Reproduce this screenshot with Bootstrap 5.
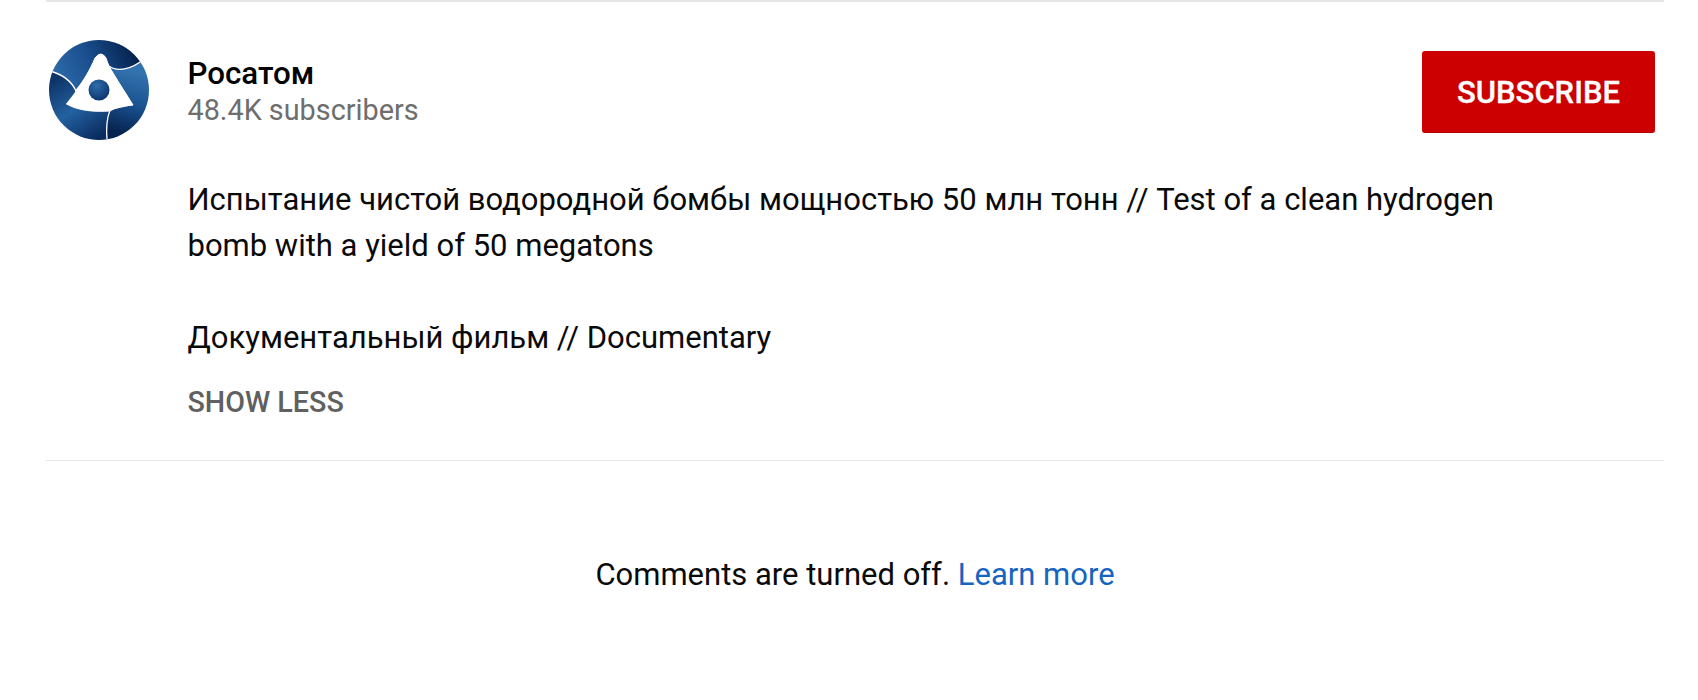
<!DOCTYPE html>
<html lang="en"><head><meta charset="utf-8">
<link href="https://cdn.jsdelivr.net/npm/bootstrap@5.3.0/dist/css/bootstrap.min.css" rel="stylesheet">
<style>
html,body{height:700px;overflow:hidden;background:#fff}
body{font-family:Roboto,"Liberation Sans",sans-serif;color:#0a0a0a}
.page-wrap{margin:0 34px 0 46px}
.owner-block{border-top:2px solid #e6e6e6;border-bottom:1px solid #e6e6e6;height:461px;padding-top:38px}
.avatar-box{width:100px;height:100px;margin:0 38.5px 0 3px;flex:none}
.avatar-box svg{display:block}
.owner-name{font-size:31.3px;font-weight:500;line-height:37px;margin-top:15px;color:#030303}
.sub-count{font-size:28.8px;line-height:37px;color:#6e6e6e}
.sub-btn{width:233px;height:82px;margin:11px 9px 0 0;background:#cc0000;border:0;border-bottom:1px solid #b80000;border-radius:3px;color:#fff;font-size:31px;font-weight:500;padding:4px 0 0;-webkit-text-stroke:.3px #fff}
.desc-block{margin:0 0 0 141.5px;font-size:31px;line-height:45.7px;width:1340px;color:#0a0a0a;padding-top:37px}
.desc-gap{margin-top:47px}
.show-less{font-size:28.7px;font-weight:500;color:#606060;line-height:37px;margin:0 0 0 141.5px;padding-top:23px}
.comments-off{font-size:31px;line-height:45px;margin-top:91px}
.learn-link{color:#1565c0;text-decoration:none}
</style></head><body>
<div class="page-wrap">
  <div class="owner-block">
    <div class="d-flex align-items-start">
      <div class="avatar-box">
        <svg viewBox="0 0 100 100" width="100" height="100" role="img" aria-label="Росатом">
          <defs>
            <clipPath id="disc"><circle cx="50" cy="50" r="50"/></clipPath>
            <linearGradient id="bladeTop" gradientUnits="userSpaceOnUse" x1="12" y1="42" x2="82" y2="8"><stop offset="0" stop-color="#2c68a8"/><stop offset=".45" stop-color="#1a4f8e"/><stop offset="1" stop-color="#06234f"/></linearGradient>
            <linearGradient id="bladeRight" gradientUnits="userSpaceOnUse" x1="85" y1="32" x2="68" y2="92"><stop offset="0" stop-color="#3272ad"/><stop offset=".5" stop-color="#1a5290"/><stop offset="1" stop-color="#06234f"/></linearGradient>
            <linearGradient id="bladeLeft" gradientUnits="userSpaceOnUse" x1="8" y1="38" x2="48" y2="98"><stop offset="0" stop-color="#0e3468"/><stop offset=".5" stop-color="#2361a0"/><stop offset="1" stop-color="#0a2c60"/></linearGradient>
            <radialGradient id="core" cx=".4" cy=".3" r=".8"><stop offset="0" stop-color="#2f6cab"/><stop offset="1" stop-color="#0a2f66"/></radialGradient>
          </defs>
          <g clip-path="url(#disc)">
            <path d="M1 31C12 34 22 40 27 51L51 15L60 26C68 32 82 30 95 19L75 -5H20L-5 25Z" fill="url(#bladeTop)"/>
            <path d="M95 19C82 30 68 32 60 26L84 65L61 70C58 78 57 88 58 99V105H105V19Z" fill="url(#bladeRight)"/>
            <path d="M1 31C12 34 22 40 27 51L17 64L61 70C58 78 57 88 58 99V105H-5V31Z" fill="url(#bladeLeft)"/>
            <path d="M46 18Q52 10 57 18C59 24 61 29 64 33C71 45 78 55 84 65C72 66 66 68 61 71C46 72 30 71 17.500 64C23 60 26 56 27 50C34 42 41 30 46 18Z" fill="#fff" stroke="#fff" stroke-width="1" stroke-linejoin="round"/>
            <g fill="none" stroke="#fff" stroke-width="1.300">
              <path d="M1 31C12 34 22 40 27 51"/>
              <path d="M60 26C68 32 82 30 95 19"/>
              <path d="M61 70C58 78 57 88 58 99"/>
            </g>
          </g>
          <circle cx="50" cy="50" r="10.500" fill="url(#core)"/>
        </svg>
      </div>
      <div class="flex-grow-1">
        <div class="owner-name">Росатом</div>
        <div class="sub-count">48.4K subscribers</div>
      </div>
      <button class="btn sub-btn" type="button">SUBSCRIBE</button>
    </div>
    <div class="desc-block">
      <div>Испытание чистой водородной бомбы мощностью 50 млн тонн // Test of a clean hydrogen bomb with a yield of 50 megatons</div>
      <div class="desc-gap">Документальный фильм // Documentary</div>
    </div>
    <div class="show-less">SHOW LESS</div>
  </div>
  <div class="comments-off text-center">Comments are turned off. <a class="learn-link" href="#">Learn more</a></div>
</div>
<script src="https://cdn.jsdelivr.net/npm/bootstrap@5.3.0/dist/js/bootstrap.bundle.min.js"></script>
</body></html>
